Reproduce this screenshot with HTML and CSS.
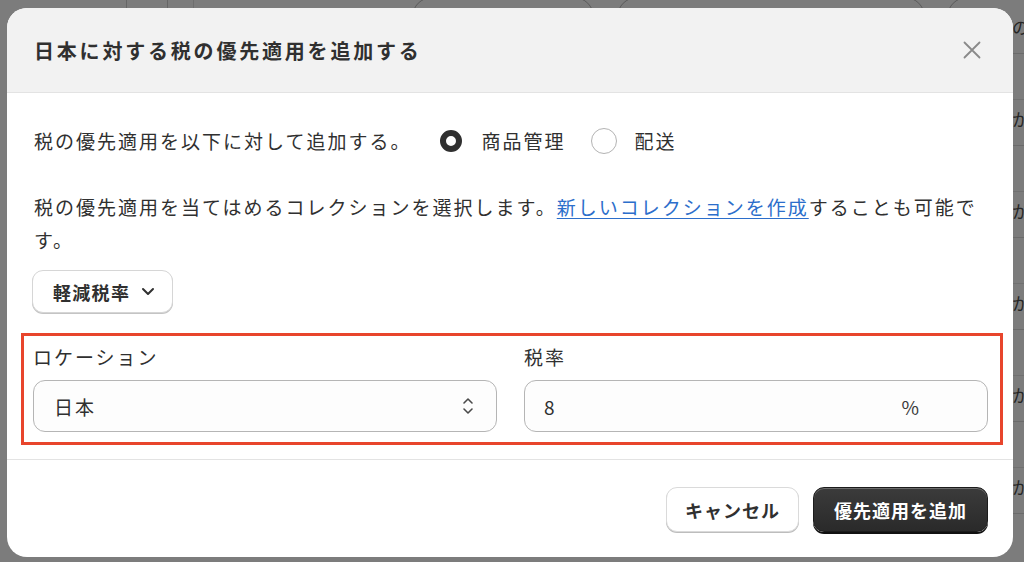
FILE: index.html
```html
<!DOCTYPE html>
<html lang="ja">
<head>
    <meta charset="UTF-8">
    <meta name="viewport" content="width=device-width, initial-scale=1.0">
    <title>税の優先適用</title>
    <link rel="stylesheet" href="styles.css">
</head>
<body>
    <!-- 後ろのページ（オーバーレイで暗くなっている） -->
    <div class="backdrop">
        <div class="bg-top">
            <span class="bg-sep bg-sep-a"></span>
            <span class="bg-sep bg-sep-b"></span>
            <span class="bg-sep bg-sep-c"></span>
            <span class="bg-pill bg-pill-a"></span>
            <span class="bg-pill bg-pill-b"></span>
            <span class="bg-pill bg-pill-c"></span>
        </div>
        <div class="bg-list">
            <div class="bg-row">の</div>
            <div class="bg-row bg-row-gap"></div>
            <div class="bg-row">か</div>
            <div class="bg-row bg-row-gap"></div>
            <div class="bg-row">か</div>
            <div class="bg-row bg-row-gap"></div>
            <div class="bg-row">か</div>
            <div class="bg-row bg-row-gap"></div>
            <div class="bg-row">か</div>
            <div class="bg-row bg-row-gap"></div>
            <div class="bg-row">か</div>
        </div>
    </div>

    <div class="modal">
        <div class="modal-header">
            <h2>日本に対する税の優先適用を追加する</h2>
            <button class="close" aria-label="閉じる">
                <svg width="18" height="18" viewBox="0 0 18 18"><path d="M1.5 1.5 L16.5 16.5 M16.5 1.5 L1.5 16.5" stroke="#8a8a8a" stroke-width="1.8" fill="none" stroke-linecap="round"/></svg>
            </button>
        </div>

        <div class="modal-body">
            <div class="target-row">
                <span class="target-text">税の優先適用を以下に対して追加する。</span>
                <label class="radio-opt"><span class="radio-box"><span class="radio checked"></span></span><span>商品管理</span></label>
                <label class="radio-opt"><span class="radio-box"><span class="radio"></span></span><span>配送</span></label>
            </div>

            <p class="help">税の優先適用を当てはめるコレクションを選択します。<a href="#">新しいコレクションを作成</a>することも可能です。</p>

            <button class="picker">
                <span>軽減税率</span>
                <svg width="14" height="9" viewBox="0 0 14 9"><path d="M2 2 L7 7 L12 2" stroke="#303030" stroke-width="2" fill="none" stroke-linecap="round" stroke-linejoin="round"/></svg>
            </button>

            <div class="highlight">
                <div class="field-grid">
                    <div class="field">
                        <div class="field-label">ロケーション</div>
                        <div class="input">
                            <span>日本</span>
                            <svg width="14" height="22" viewBox="0 0 14 22"><path d="M3 8 L7 4 L11 8 M3 14 L7 18 L11 14" stroke="#4a4a4a" stroke-width="1.6" fill="none" stroke-linecap="round" stroke-linejoin="round"/></svg>
                        </div>
                    </div>
                    <div class="field">
                        <div class="field-label">税率</div>
                        <div class="input input-num">
                            <span>8</span>
                            <span class="suffix">%</span>
                        </div>
                    </div>
                </div>
            </div>
        </div>

        <div class="modal-footer">
            <button class="btn">キャンセル</button>
            <button class="btn btn-primary">優先適用を追加</button>
        </div>
    </div>
</body>
</html>
```

FILE: styles.css
```css
*{
    margin: 0;
    padding: 0;
    box-sizing: border-box;
}
body{
    width: 1024px;
    height: 562px;
    overflow: hidden;
    background-color: #7c7c7c;
    font-family: "Noto Sans CJK JP", "Noto Sans", sans-serif;
    color: #303030;
    position: relative;
}

/* 後ろのページ */
.backdrop{
    display: flex;
    flex-direction: column;
    height: 562px;
}
.bg-top{
    display: flex;
    height: 8px;
    overflow: hidden;
    padding-left: 126px;
}
.bg-sep{
    flex: none;
    height: 8px;
    border-left: 1px solid #666;
}
.bg-sep-a{ width: 41px; }
.bg-sep-b{ width: 26px; }
.bg-sep-c{ width: 219px; border-left-color: #6e6e6e; }
.bg-pill{
    flex: none;
    height: 40px;
    margin-top: -3px;
    border: 1.5px solid #5a5a5a;
    border-radius: 20px;
}
.bg-pill-a{ width: 182px; margin-right: 23px; }
.bg-pill-b{ width: 308px; margin-right: 22px; }
.bg-pill-c{ width: 120px; }
.bg-list{
    margin-left: 1012px;
    display: flex;
    flex-direction: column;
}
.bg-row{
    height: 46px;
    padding-top: 9px;
    line-height: 20px;
    font-size: 17px;
    color: #262626;
    border-bottom: 1px solid #6b6b6b;
}
.bg-row-gap{
    height: 46px;
    border-bottom-color: #707070;
}

/* ダイアログ */
.modal{
    position: absolute;
    left: 7px;
    top: 8px;
    width: 1006px;
    height: 549px;
    background: #fff;
    border-radius: 20px;
    overflow: hidden;
    display: flex;
    flex-direction: column;
}
.modal-header{
    height: 85px;
    background: #f2f2f2;
    border-bottom: 1px solid #e3e3e3;
    display: flex;
    align-items: center;
    justify-content: space-between;
    padding: 0 31px 0 27px;
}
.modal-header h2{
    font-size: 20px;
    font-weight: 700;
    letter-spacing: 2.8px;
    color: #303030;
}
.close{
    border: none;
    background: none;
    width: 20px;
    height: 20px;
    display: flex;
    align-items: center;
    justify-content: center;
}

.modal-body{
    height: 366px;
    padding: 33px 27px 0 27px;
    font-size: 19px;
    letter-spacing: 2px;
}
.target-row{
    display: flex;
    align-items: center;
    height: 30px;
    line-height: 30px;
}
.radio-opt{
    display: flex;
    align-items: center;
    gap: 17px;
    margin-left: 27px;
}
.radio-opt + .radio-opt{
    margin-left: 26px;
}
.radio-box{
    width: 26px;
    height: 26px;
    display: flex;
    align-items: center;
    justify-content: center;
}
.radio{
    width: 26px;
    height: 26px;
    border-radius: 50%;
    border: 1px solid #b3b3b3;
    background: #fff;
}
.radio.checked{
    width: 22px;
    height: 22px;
    border: 6.5px solid #303030;
}

.help{
    margin-top: 34px;
    line-height: 33px;
}
.help a{
    color: #2c6ecb;
    text-decoration: underline;
    text-underline-offset: 3px;
}

.picker{
    margin-top: 14px;
    height: 43px;
    display: flex;
    align-items: center;
    gap: 11px;
    padding: 0 17px 0 20px;
    margin-left: -2px;
    background: #fff;
    border: 1px solid #d6d6d6;
    border-radius: 11px;
    box-shadow: 0 1px 0 #c4c4c4;
    font-family: inherit;
    font-size: 18px;
    font-weight: 700;
    letter-spacing: 1.3px;
    color: #303030;
}

/* 赤枠の注記 */
.highlight{
    margin: 20px -17px 0 -13px;
    border: 3px solid #e8452c;
    padding: 9px 12px 10px 9px;
}
.field-grid{
    display: grid;
    grid-template-columns: 1fr 1fr;
    gap: 27px;
}
.field-label{
    line-height: 24px;
    font-size: 19px;
}
.input{
    margin-top: 11px;
    height: 52px;
    border: 1px solid #b5b5b5;
    border-radius: 12px;
    background: #fdfdfd;
    display: flex;
    align-items: center;
    justify-content: space-between;
    padding: 0 21px 0 20px;
}
.input-num{
    padding: 0 68px 0 19px;
}
.suffix{
    letter-spacing: 0;
    color: #3a3a3a;
}

.modal-footer{
    flex: 1;
    border-top: 1px solid #e3e3e3;
    display: flex;
    justify-content: flex-end;
    align-items: flex-start;
    gap: 14px;
    padding: 27px 25px 0 0;
}
.btn{
    height: 45px;
    padding: 0 18px;
    border-radius: 11px;
    background: #fff;
    border: 1px solid #dadada;
    box-shadow: 0 1px 0 #bdbdbd;
    font-family: inherit;
    font-size: 18px;
    font-weight: 700;
    letter-spacing: 1px;
    color: #303030;
}
.btn-primary{
    padding: 0 20px;
    color: #fff;
    border: 1px solid #1c1c1c;
    background: linear-gradient(#3b3b3b, #2a2a2a);
    box-shadow: inset 0 1px 0 rgba(255,255,255,.25), 0 2px 0 #111;
}
```
